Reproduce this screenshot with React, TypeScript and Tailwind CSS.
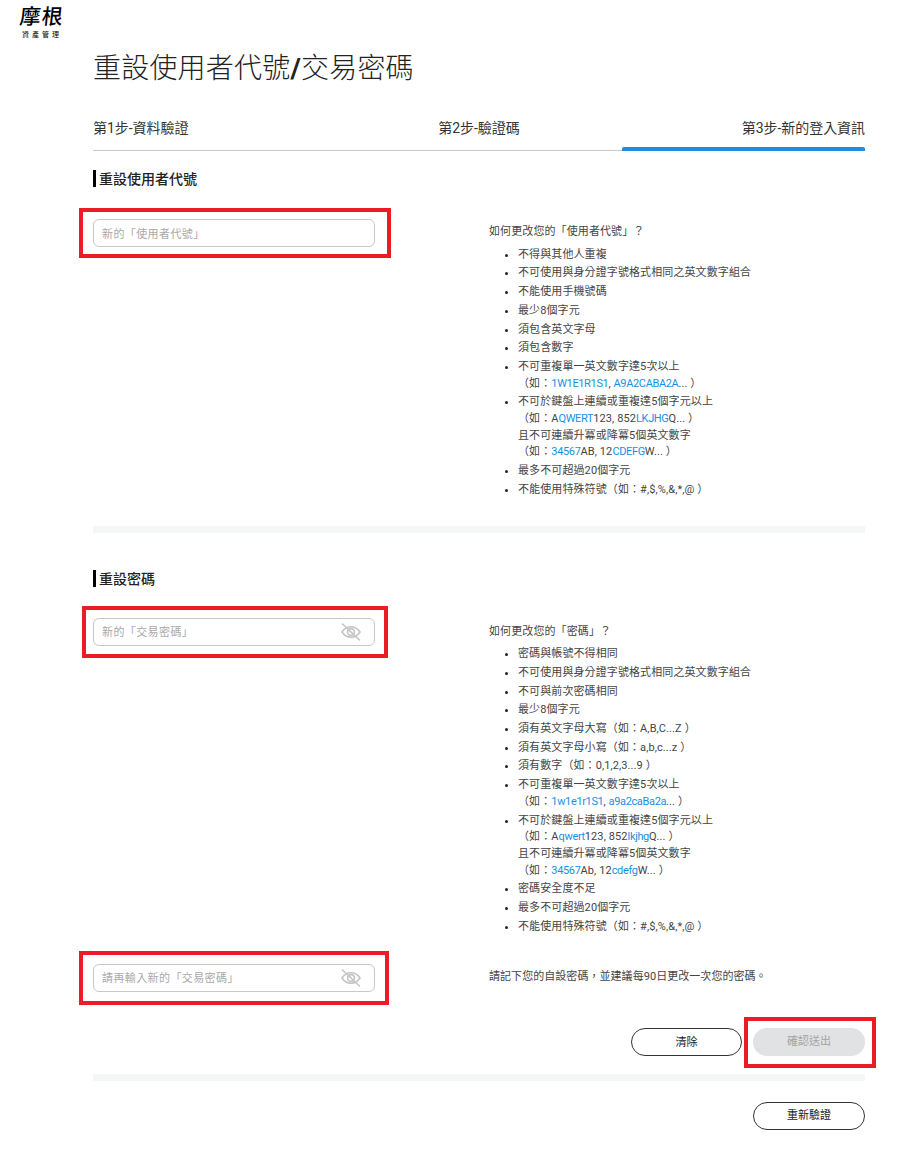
import { ReactNode } from "react";

const FONT = "font-['Roboto','Noto_Sans_CJK_TC',sans-serif]";

const B = ({ children }: { children: ReactNode }) => (
  <span className="tracking-[-0.35px] text-[#1a8fe3]">{children}</span>
);

const usernameRules: ReactNode[] = [
  "不得與其他人重複",
  "不可使用與身分證字號格式相同之英文數字組合",
  "不能使用手機號碼",
  "最少8個字元",
  "須包含英文字母",
  "須包含數字",
  <>
    不可重複單一英文數字達5次以上
    <br />（如：<B>1W1E1R1S1</B>, <B>A9A2CABA2A</B>... ）
  </>,
  <>
    不可於鍵盤上連續或重複達5個字元以上
    <br />（如：A<B>QWERT</B>123, 852<B>LKJHG</B>Q... ）
    <br />
    且不可連續升冪或降冪5個英文數字
    <br />（如：<B>34567</B>AB, 12<B>CDEFG</B>W... ）
  </>,
  "最多不可超過20個字元",
  "不能使用特殊符號（如：#,$,%,&,*,@ ）",
];

const passwordRules: ReactNode[] = [
  "密碼與帳號不得相同",
  "不可使用與身分證字號格式相同之英文數字組合",
  "不可與前次密碼相同",
  "最少8個字元",
  "須有英文字母大寫（如：A,B,C...Z ）",
  "須有英文字母小寫（如：a,b,c...z ）",
  "須有數字（如：0,1,2,3...9 ）",
  <>
    不可重複單一英文數字達5次以上
    <br />（如：<B>1w1e1r1S1</B>, <B>a9a2caBa2a</B>... ）
  </>,
  <>
    不可於鍵盤上連續或重複達5個字元以上
    <br />（如：A<B>qwert</B>123, 852<B>lkjhg</B>Q... ）
    <br />
    且不可連續升冪或降冪5個英文數字
    <br />（如：<B>34567</B>Ab, 12<B>cdefg</B>W... ）
  </>,
  "密碼安全度不足",
  "最多不可超過20個字元",
  "不能使用特殊符號（如：#,$,%,&,*,@ ）",
];

function EyeOff() {
  return (
    <svg width="20" height="18" viewBox="0 0 20 18" fill="none" stroke="#c4c4c4" strokeWidth="1.6" strokeLinecap="round">
      <path d="M1 9c2.400-3.600 5.400-5.200 9-5.200s6.600 1.600 9 5.200c-2.400 3.600-5.400 5.200-9 5.200S3.400 12.600 1 9z" />
      <circle cx="10" cy="9" r="3.400" />
      <path d="M1.500 1 18.500 17" />
    </svg>
  );
}

function Field({ placeholder, eye }: { placeholder: string; eye?: boolean }) {
  return (
    <div className="flex h-[28px] w-[282px] items-center justify-between rounded-[6px] border border-[#c8c8c8] bg-white pl-[8px] pr-[13px] text-[11px] tracking-[0.4px] text-[#a9a9a9]">
      <span className="mt-[4px]">{placeholder}</span>
      {eye && <EyeOff />}
    </div>
  );
}

function Heading({ children }: { children: ReactNode }) {
  return (
    <h2 className="flex h-[17px] items-center border-l-[3px] border-black pt-[2px] pl-[3px] text-[14px] leading-[17px] font-medium text-[#222]">
      {children}
    </h2>
  );
}

function Rules({ title, items }: { title: string; items: ReactNode[] }) {
  return (
    <div className="text-[11px] leading-[16.7px] tracking-[0.1px] text-[#444]">
      <p>{title}</p>
      <ul className="mt-[6px] flex flex-col gap-[2px] pl-[29px]">
        {items.map((item, i) => (
          <li key={i} className="list-disc marker:text-[#222]">
            {item}
          </li>
        ))}
      </ul>
    </div>
  );
}

const Band = () => <div className="h-[7px] bg-[#f5f6f8]" />;

const Pill = ({ children, width }: { children: ReactNode; width: string }) => (
  <button
    type="button"
    className={`h-[28px] ${width} rounded-full border border-[#333] bg-white pt-[2px] text-[11px] text-[#222]`}
  >
    {children}
  </button>
);

export default function App() {
  return (
    <div className={`${FONT} h-[1149px] overflow-hidden bg-white`}>
      <div className="flex h-[42px] w-[84px] flex-col items-center pt-[3px] text-black">
        <div className="-skew-x-6 text-[21px] leading-[24px] font-medium tracking-[1px] [font-family:'Noto_Sans_CJK_TC',serif]">
          摩根
        </div>
        <div className="mt-[4px] text-[7px] leading-[9px] tracking-[3px]">資產管理</div>
      </div>

      <main className="ml-[93px] w-[772px]">
        <h1 className="mt-[10px] text-[28px] leading-[34px] font-light tracking-[0.2px] text-[#222]">
          重設使用者代號<span className="font-bold">/</span>交易密碼
        </h1>

        <div className="relative mt-[33px] flex h-[32px] items-start justify-between border-b border-[#c8c8c8] text-[14px] leading-[18px] tracking-[-0.05px] text-[#333]">
          <span className="w-[244px]">第1步-資料驗證</span>
          <span className="w-[244px] text-center">第2步-驗證碼</span>
          <span className="w-[244px] text-right">第3步-新的登入資訊</span>
          <div className="absolute right-0 -bottom-px h-[4px] w-[243px] rounded-t-[2px] bg-[#1a8fe3]" />
        </div>

        <section className="mt-[19px]">
          <Heading>重設使用者代號</Heading>
          <div className="mt-[21px] flex items-start">
            <div className="w-[396px]">
              <div className="-ml-[14px] w-[312px] border-[4px] border-[#ed1c24] py-[7px] pr-[12px] pl-[10px]">
                <Field placeholder="新的「使用者代號」" />
              </div>
            </div>
            <div className="mt-[16px]">
              <Rules title="如何更改您的「使用者代號」？" items={usernameRules} />
            </div>
          </div>
        </section>

        <div className="mt-[27px]">
          <Band />
        </div>

        <section className="mt-[37px]">
          <Heading>重設密碼</Heading>
          <div className="mt-[19px] flex items-start">
            <div className="w-[396px]">
              <div className="-ml-[11px] w-[306px] border-[4px] border-[#ed1c24] py-[8px] pr-[9px] pl-[7px]">
                <Field placeholder="新的「交易密碼」" eye />
              </div>
            </div>
            <div className="mt-[18px]">
              <Rules title="如何更改您的「密碼」？" items={passwordRules} />
            </div>
          </div>

          <div className="mt-[15px] flex items-start">
            <div className="w-[396px]">
              <div className="-ml-[14px] w-[310px] border-[4px] border-[#ed1c24] py-[9px] pr-[9px] pl-[10px]">
                <Field placeholder="請再輸入新的「交易密碼」" eye />
              </div>
            </div>
            <p className="mt-[18px] text-[11px] leading-[16.8px] tracking-[0.05px] text-[#444]">
              請記下您的自設密碼，並建議每90日更改一次您的密碼。
            </p>
          </div>
        </section>

        <div className="mt-[12px] flex items-center justify-end">
          <Pill width="w-[111px]">清除</Pill>
          <div className="-mr-[11px] ml-[2px] border-[4px] border-[#ed1c24] pt-[7px] pr-[7px] pb-[8px] pl-[5px]">
            <button
              type="button"
              className="block h-[28px] w-[112px] rounded-full bg-[#e1e2e4] pt-[2px] text-[11px] text-[#a3a3a3]"
            >
              確認送出
            </button>
          </div>
        </div>

        <div className="mt-[6px]">
          <Band />
        </div>

        <div className="mt-[21px] flex justify-end">
          <Pill width="w-[112px]">重新驗證</Pill>
        </div>
      </main>
    </div>
  );
}
